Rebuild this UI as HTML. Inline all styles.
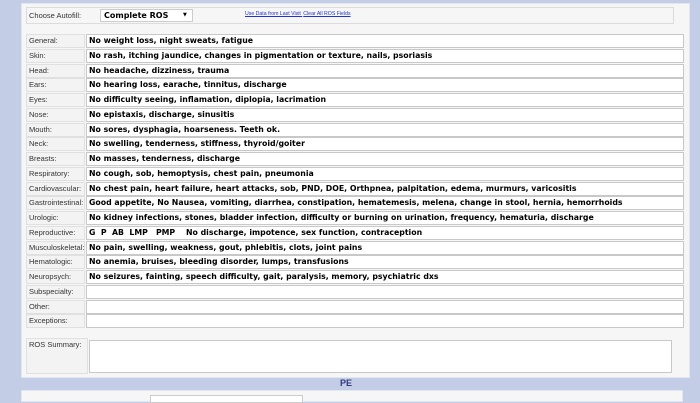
<!DOCTYPE html>
<html><head><meta charset="utf-8"><style>
*{margin:0;padding:0;box-sizing:border-box}
body{width:700px;height:400px;background:#c3cde6;position:relative;overflow:hidden;font-family:"Liberation Sans",Arial,sans-serif}
.panel{position:absolute;left:21px;top:3px;width:669px;height:375px;background:#f6f6f6;border:1px solid #e2e6f0}
.hdr{position:absolute;left:26px;top:7px;width:648px;height:17px;border:1px solid #dcdcdc;background:#f6f6f6}
.lbl{position:absolute;left:26px;width:59px;height:14px;background:#f3f3f3;border:1px solid #e0e0e0;font-size:7.5px;color:#333;padding:1px 2px;line-height:10px;white-space:nowrap;overflow:hidden}
.val{position:absolute;left:86px;width:598px;height:14px;background:#fff;border:1px solid #c8c8c8;font-family:"DejaVu Sans",Verdana,sans-serif;font-weight:bold;font-size:7.8px;color:#000;padding-left:2px;line-height:12px;white-space:pre;overflow:hidden}
</style></head><body>
<div class="panel"></div>
<div class="hdr"></div>
<div style="position:absolute;left:29px;top:11px;font-size:7.5px;color:#333">Choose Autofill:</div>
<div style="position:absolute;left:100px;top:9px;width:93px;height:13px;background:#fff;border:1px solid #ccc;font-family:'DejaVu Sans',sans-serif;font-weight:bold;font-size:8px;line-height:11px;padding-left:3px">Complete ROS<span style="position:absolute;left:82px;font-size:5px">▼</span></div>
<div style="position:absolute;left:245px;top:11px;font-size:5.2px;color:#2233cc;text-decoration:underline;white-space:nowrap">Use Data from Last Visit <span style="margin-left:1px">Clear All ROS Fields</span></div>
<div id="rows"></div>
<div class="lbl" style="top:338px;height:36px;width:62px">ROS Summary:</div>
<div style="position:absolute;left:89px;top:340px;width:583px;height:33px;background:#fff;border:1px solid #c8c8c8"></div>
<div style="position:absolute;left:340px;top:378px;font-size:9px;font-weight:bold;color:#333a80">PE</div>
<div style="position:absolute;left:21px;top:390px;width:662px;height:12px;background:#f6f6f6;border:1px solid #e2e6f0"></div>
<div style="position:absolute;left:150px;top:395px;width:153px;height:8px;background:#fff;border:1px solid #ccc"></div>
<script>
var d=[["General:","No weight loss, night sweats, fatigue"],["Skin:","No rash, itching jaundice, changes in pigmentation or texture, nails, psoriasis"],["Head:","No headache, dizziness, trauma"],["Ears:","No hearing loss, earache, tinnitus, discharge"],["Eyes:","No difficulty seeing, inflamation, diplopia, lacrimation"],["Nose:","No epistaxis, discharge, sinusitis"],["Mouth:","No sores, dysphagia, hoarseness. Teeth ok."],["Neck:","No swelling, tenderness, stiffness, thyroid/goiter"],["Breasts:","No masses, tenderness, discharge"],["Respiratory:","No cough, sob, hemoptysis, chest pain, pneumonia"],["Cardiovascular:","No chest pain, heart failure, heart attacks, sob, PND, DOE, Orthpnea, palpitation, edema, murmurs, varicositis"],["Gastrointestinal:","Good appetite, No Nausea, vomiting, diarrhea, constipation, hematemesis, melena, change in stool, hernia, hemorrhoids"],["Urologic:","No kidney infections, stones, bladder infection, difficulty or burning on urination, frequency, hematuria, discharge"],["Reproductive:","G  P  AB  LMP   PMP    No discharge, impotence, sex function, contraception"],["Musculoskeletal:","No pain, swelling, weakness, gout, phlebitis, clots, joint pains"],["Hematologic:","No anemia, bruises, bleeding disorder, lumps, transfusions"],["Neuropsych:","No seizures, fainting, speech difficulty, gait, paralysis, memory, psychiatric dxs"],["Subspecialty:",""],["Other:",""],["Exceptions:",""]];
var h="";for(var i=0;i<d.length;i++){var t=Math.round(34+i*14.75);h+='<div class="lbl" style="top:'+t+'px">'+d[i][0]+'</div><div class="val" style="top:'+t+'px">'+d[i][1]+'</div>';}
document.getElementById("rows").innerHTML=h;
</script>
</body></html>
